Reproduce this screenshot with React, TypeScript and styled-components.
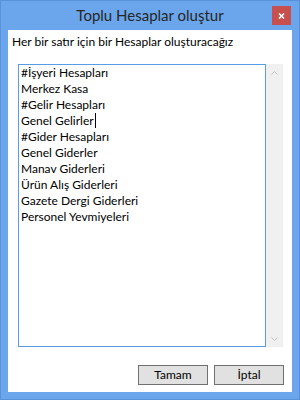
import React from "react";
import styled, { createGlobalStyle } from "styled-components";

const GlobalStyle = createGlobalStyle`
  html, body { margin: 0; padding: 0; background: #ffffff; }
  #root { width: 300px; height: 400px; }
`;

const Window = styled.div`
  box-sizing: border-box;
  width: 300px;
  height: 400px;
  display: flex;
  flex-direction: column;
  padding: 0 7px 7px 7px;
  background: #6ba6ec;
  border: 1px solid #5a92da;
  font-family: Lato, "Liberation Sans", sans-serif;
  color: #000;
`;

const TitleBar = styled.div`
  height: 29px;
  flex: none;
  display: grid;
  grid-template-columns: 1fr auto 1fr;
  align-items: start;
`;

const Title = styled.div`
  grid-column: 2;
  padding-top: 4px;
  font-size: 15px;
  line-height: 20px;
  color: #262626;
  white-space: nowrap;
`;

const CloseButton = styled.button`
  grid-column: 3;
  justify-self: end;
  margin: 5px 1px 0 0;
  width: 19px;
  height: 19px;
  padding: 0;
  border: none;
  background: #c7504f;
  display: flex;
  align-items: center;
  justify-content: center;
`;

const Client = styled.div`
  flex: 1;
  display: flex;
  flex-direction: column;
  background: #ffffff;
  padding: 4px 8px 7px 10px;
  min-height: 0;
`;

const Label = styled.div`
  margin-left: -6px;
  font-size: 12px;
  line-height: 16px;
  white-space: nowrap;
`;

const EditorRow = styled.div`
  flex: 1;
  display: flex;
  margin-top: 14px;
  min-height: 0;
`;

const TextBox = styled.div`
  flex: 1;
  box-sizing: border-box;
  border: 1px solid #569de5;
  padding: 0 2px;
  font-size: 12px;
  line-height: 16px;
  overflow: hidden;
`;

const Line = styled.div`
  white-space: nowrap;
`;

const Caret = styled.span`
  display: inline-block;
  width: 1px;
  height: 15px;
  margin-left: 1px;
  background: #000;
  vertical-align: -3px;
`;

const ScrollTrack = styled.div`
  width: 17px;
  margin-right: 1px;
  background: #f0f0f0;
  display: flex;
  flex-direction: column;
  justify-content: space-between;
`;

const ArrowBox = styled.div`
  height: 17px;
  display: flex;
  align-items: center;
  justify-content: center;
`;

const ButtonRow = styled.div`
  display: flex;
  justify-content: flex-end;
  gap: 6px;
  margin-top: 18px;
`;

const Button = styled.button`
  box-sizing: border-box;
  width: 70px;
  height: 20px;
  padding: 0;
  border: 1px solid #707070;
  background: #e1e1e1;
  font-family: Lato, "Liberation Sans", sans-serif;
  font-size: 12px;
  line-height: 16px;
  color: #000;
`;

const lines = [
  "#İşyeri Hesapları",
  "Merkez Kasa",
  "#Gelir Hesapları",
  "Genel Gelirler",
  "#Gider Hesapları",
  "Genel Giderler",
  "Manav Giderleri",
  "Ürün Alış Giderleri",
  "Gazete Dergi Giderleri",
  "Personel Yevmiyeleri",
];

const Chevron = ({ up }: { up?: boolean }) => (
  <svg width="7" height="4" viewBox="0 0 7 4">
    <path
      d={up ? "M0.5 3.5 L3.5 0.5 L6.5 3.5" : "M0.5 0.5 L3.5 3.5 L6.5 0.5"}
      fill="none"
      stroke="#c2c2c2"
      strokeWidth="1"
    />
  </svg>
);

export default function App() {
  return (
    <>
      <GlobalStyle />
      <Window>
        <TitleBar>
          <Title>Toplu Hesaplar oluştur</Title>
          <CloseButton aria-label="Kapat">
            <svg width="7" height="6" viewBox="0 0 7 6">
              <path d="M1 0.5 L6 5.5 M6 0.5 L1 5.5" stroke="#fff" strokeWidth="1.6" />
            </svg>
          </CloseButton>
        </TitleBar>
        <Client>
          <Label>Her bir satır için bir Hesaplar oluşturacağız</Label>
          <EditorRow>
            <TextBox>
              {lines.map((l) => (
                <Line key={l}>
                  {l}
                  {l === "Genel Gelirler" && <Caret />}
                </Line>
              ))}
            </TextBox>
            <ScrollTrack>
              <ArrowBox>
                <Chevron up />
              </ArrowBox>
              <ArrowBox>
                <Chevron />
              </ArrowBox>
            </ScrollTrack>
          </EditorRow>
          <ButtonRow>
            <Button>Tamam</Button>
            <Button>İptal</Button>
          </ButtonRow>
        </Client>
      </Window>
    </>
  );
}
